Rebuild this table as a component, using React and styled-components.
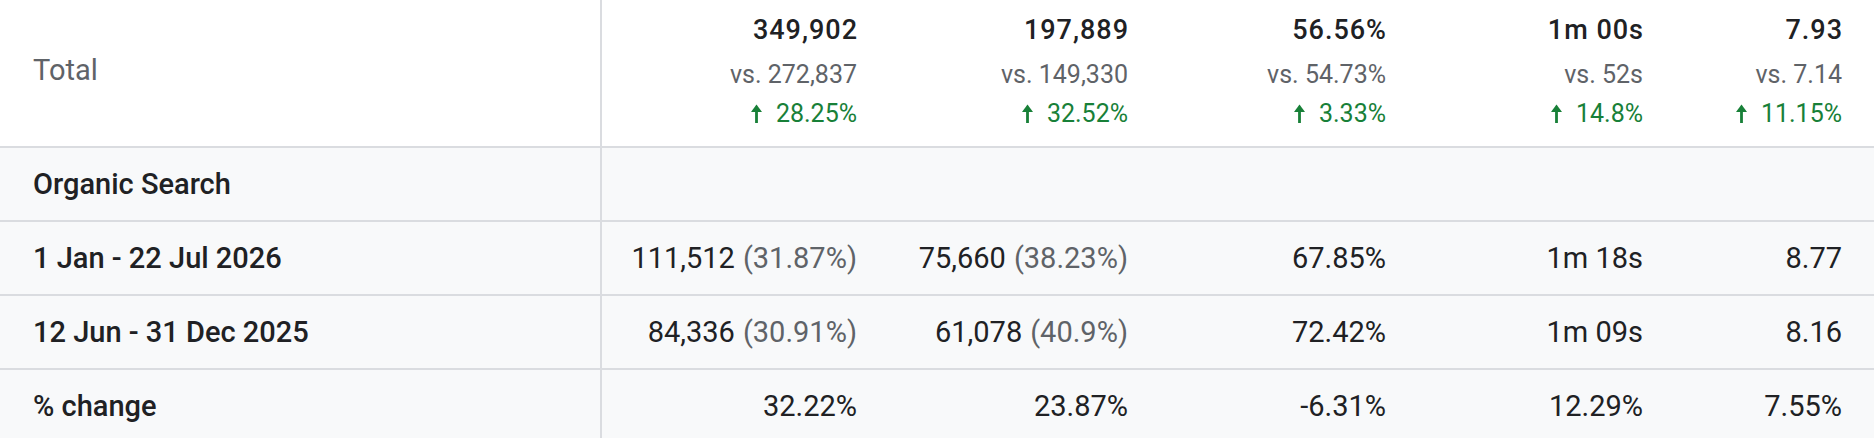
import styled, { createGlobalStyle } from "styled-components";

const GlobalStyle = createGlobalStyle`
  html, body {
    margin: 0;
    padding: 0;
    overflow: hidden;
    background: #ffffff;
  }
  body {
    font-family: Roboto, "Liberation Sans", Arial, sans-serif;
    color: #202124;
  }
`;

const colors = {
  text: "#202124",
  grey: "#5f6368",
  green: "#188038",
  border: "#dadce0",
  rowBg: "#f8f9fa",
};

const Table = styled.div`
  width: 1874px;
  display: flex;
  flex-direction: column;
`;

const Row = styled.div`
  display: grid;
  grid-template-columns: 602px 287px 271px 258px 257px 199px;
  height: ${(props) => (props.$header ? "146px" : "72px")};
  background: ${(props) => (props.$header ? "#ffffff" : colors.rowBg)};
  border-bottom: 2px solid ${colors.border};
`;

const LabelCell = styled.div`
  display: flex;
  align-items: center;
  padding-left: 33px;
  padding-bottom: ${(props) => (props.$header ? "7px" : "0")};
  border-right: 2px solid ${colors.border};
  font-size: 29px;
  font-weight: ${(props) => (props.$header ? 400 : 500)};
  color: ${(props) => (props.$header ? colors.grey : colors.text)};
  white-space: nowrap;
`;

const TotalCell = styled.div`
  display: flex;
  flex-direction: column;
  align-items: flex-end;
  padding: 14px 32px 13px 0;
  white-space: nowrap;
`;

const TotalValue = styled.div`
  font-size: 27px;
  line-height: 32px;
  font-weight: 500;
  letter-spacing: 1px;
  margin-right: -1px;
  color: ${colors.text};
`;

const CompareValue = styled.div`
  margin-top: 9px;
  font-size: 25px;
  line-height: 40px;
  color: ${colors.grey};
`;

const ChangeValue = styled.div`
  display: flex;
  align-items: baseline;
  font-size: 25px;
  line-height: 38px;
  color: ${colors.green};

  svg {
    width: 11px;
    height: 19px;
    margin-right: 14px;
    align-self: baseline;
    transform: translateY(1px);
  }
`;

const ValueCell = styled.div`
  display: flex;
  align-items: center;
  justify-content: flex-end;
  padding-right: 32px;
  font-size: 29px;
  color: ${colors.text};
  white-space: nowrap;
`;

const Share = styled.span`
  color: ${colors.grey};
  margin-left: 8px;
`;

const UpArrow = () => (
  <svg viewBox="0 0 11 19" aria-hidden="true">
    <polygon points="0,8 5.5,0.5 11,8" fill="currentColor" />
    <rect x="4.1" y="6.5" width="2.8" height="12.5" fill="currentColor" />
  </svg>
);

const totals = [
  { value: "349,902", compare: "vs. 272,837", change: "28.25%" },
  { value: "197,889", compare: "vs. 149,330", change: "32.52%" },
  { value: "56.56%", compare: "vs. 54.73%", change: "3.33%" },
  { value: "1m 00s", compare: "vs. 52s", change: "14.8%" },
  { value: "7.93", compare: "vs. 7.14", change: "11.15%" },
];

const rows = [
  { label: "Organic Search", cells: [null, null, null, null, null] },
  {
    label: "1 Jan - 22 Jul 2026",
    cells: [
      ["111,512", "(31.87%)"],
      ["75,660", "(38.23%)"],
      ["67.85%"],
      ["1m 18s"],
      ["8.77"],
    ],
  },
  {
    label: "12 Jun - 31 Dec 2025",
    cells: [
      ["84,336", "(30.91%)"],
      ["61,078", "(40.9%)"],
      ["72.42%"],
      ["1m 09s"],
      ["8.16"],
    ],
  },
  {
    label: "% change",
    cells: [["32.22%"], ["23.87%"], ["-6.31%"], ["12.29%"], ["7.55%"]],
  },
];

function App() {
  return (
    <>
      <GlobalStyle />
      <Table>
        <Row $header>
          <LabelCell $header>Total</LabelCell>
          {totals.map((t) => (
            <TotalCell key={t.value}>
              <TotalValue>{t.value}</TotalValue>
              <CompareValue>{t.compare}</CompareValue>
              <ChangeValue>
                <UpArrow />
                {t.change}
              </ChangeValue>
            </TotalCell>
          ))}
        </Row>

        {rows.map((row) => (
          <Row key={row.label}>
            <LabelCell>{row.label}</LabelCell>
            {row.cells.map((cell, i) => (
              <ValueCell key={i}>
                {cell && cell[0]}
                {cell && cell[1] && <Share>{cell[1]}</Share>}
              </ValueCell>
            ))}
          </Row>
        ))}
      </Table>
    </>
  );
}

export default App;
